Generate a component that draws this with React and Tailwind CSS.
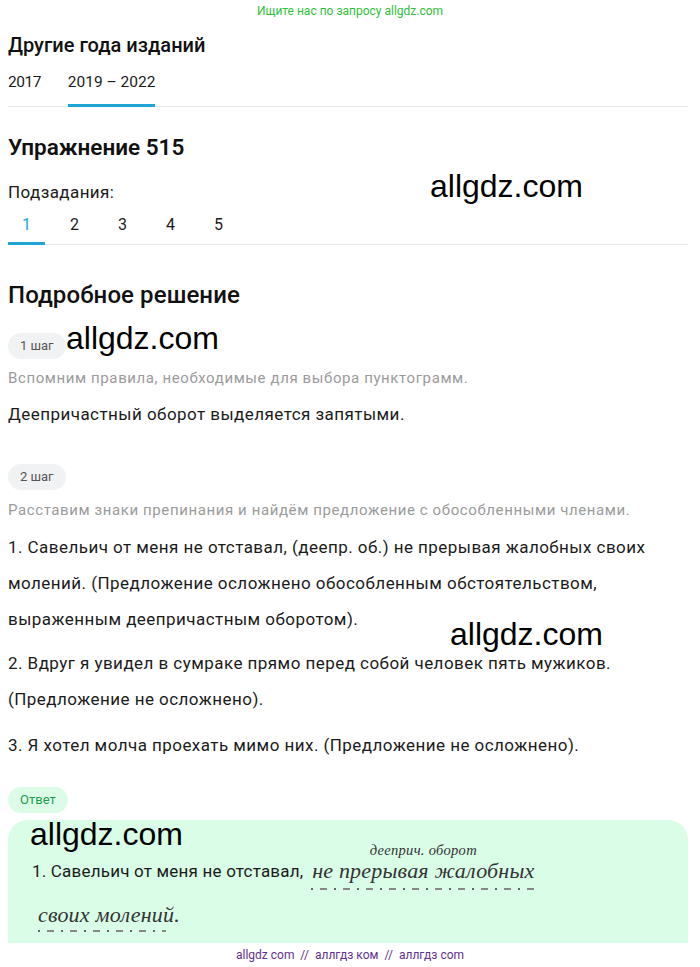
import React from "react";

function Watermark({ className }) {
  return (
    <div
      className={`absolute text-[32px] leading-none text-black font-['Liberation_Sans',Arial,sans-serif] ${className}`}
    >
      allgdz.com
    </div>
  );
}

function Badge({ children, green }) {
  return (
    <span
      className={`inline-flex items-center h-[26px] px-[12px] rounded-full text-[13px] ${
        green ? "bg-[#dcfce7] text-[#1f9d4c]" : "bg-[#f1f2f4] text-[#555]"
      }`}
    >
      {children}
    </span>
  );
}

function DashDot({ className }) {
  return (
    <div
      className={`h-[2px] bg-[repeating-linear-gradient(90deg,#666_0px,#666_2px,transparent_2px,transparent_9px,#888_9px,#888_16px,transparent_16px,transparent_23px)] ${className}`}
    />
  );
}

export default function App() {
  return (
    <div className="relative w-[700px] min-h-[967px] bg-white text-[#1b1b1b] font-['Roboto','Noto_Sans',sans-serif]">
      {/* top banner */}
      <div className="h-[22px] flex items-center justify-center text-[12px] text-[#2fbf3a]">
        Ищите нас по запросу allgdz.com
      </div>

      <div className="pl-[8px] pr-[12px]">
        <h2 className="mt-[9px] text-[20px] leading-[28px] font-medium text-[#111]">
          Другие года изданий
        </h2>
        <div className="mt-[11px] flex gap-[27px] border-b border-[#e6e7ea] text-[15.5px] leading-[24px]">
          <div className="pb-[11px] tracking-[-0.5px]">2017</div>
          <div className="pb-[10px] border-b-[3px] border-[#1fa5d4] -mb-px">2019 – 2022</div>
        </div>

        <h1 className="mt-[25px] text-[22.5px] leading-[30px] font-semibold text-[#111]">
          Упражнение 515
        </h1>
        <div className="mt-[18px] text-[17px] tracking-[0.4px] leading-[24px]">Подзадания:</div>
        <div className="mt-[9px] flex gap-[11px] border-b border-[#e6e7ea] text-[16px] leading-[24px]">
          <div className="w-[37px] text-center pb-[5px] border-b-[3px] border-[#1fa5d4] -mb-px text-[#1fa5d4]">1</div>
          <div className="w-[37px] text-center pb-[6px]">2</div>
          <div className="w-[37px] text-center pb-[6px]">3</div>
          <div className="w-[37px] text-center pb-[6px]">4</div>
          <div className="w-[37px] text-center pb-[6px]">5</div>
        </div>

        <h2 className="mt-[35px] text-[24px] leading-[30px] tracking-[0.1px] font-medium text-[#111]">
          Подробное решение
        </h2>
        <div className="mt-[23px]">
          <Badge>1 шаг</Badge>
        </div>
        <p className="mt-[9px] text-[15px] tracking-[0.6px] leading-[20px] text-[#9b9b9b]">
          Вспомним правила, необходимые для выбора пунктограмм.
        </p>
        <p className="mt-[14px] text-[17px] tracking-[0.45px] leading-[24px]">
          Деепричастный оборот выделяется запятыми.
        </p>

        <div className="mt-[38px]">
          <Badge>2 шаг</Badge>
        </div>
        <p className="mt-[10px] text-[15px] tracking-[0.6px] leading-[20px] text-[#9b9b9b]">
          Расставим знаки препинания и найдём предложение с обособленными членами.
        </p>
        <div className="mt-[9px] text-[17px] tracking-[0.45px] leading-[36px]">
          <p>
            1. Савельич от меня не отставал, (деепр. об.) не прерывая жалобных своих
            <br />
            молений. (Предложение осложнено обособленным обстоятельством,
            <br />
            выраженным деепричастным оборотом).
          </p>
          <p className="mt-[8px]">
            2. Вдруг я увидел в сумраке прямо перед собой человек пять мужиков.
            <br />
            (Предложение не осложнено).
          </p>
          <p className="mt-[10px]">
            3. Я хотел молча проехать мимо них. (Предложение не осложнено).
          </p>
        </div>

        <div className="mt-[24px]">
          <Badge green>Ответ</Badge>
        </div>

        <div className="mt-[7px] rounded-t-[20px] bg-[#d9fde6] pl-[24px] pt-[22px] pb-[40px]">
          <div className="flex items-start">
            <span className="mt-[17px] text-[17px] tracking-[0.2px] leading-[24px]">1. Савельич от меня не отставал,</span>
            <span className="ml-[8px] inline-flex flex-col items-center font-['Liberation_Serif',serif] italic text-[#333]">
              <span className="text-[14.5px] leading-[16px] tracking-[0.3px]">дееприч. оборот</span>
              <span className="mt-[1px] text-[22px] leading-[24px] tracking-[0.2px]">не прерывая жалобных</span>
              <DashDot className="mt-[5px] w-[224px]" />
              <span className="h-[10px]" />
            </span>
          </div>
          <div className="mt-[3px] ml-[6px] inline-flex flex-col font-['Liberation_Serif',serif] italic text-[#333]">
            <span className="text-[22px] leading-[24px] tracking-[0.2px]">своих молений.</span>
            <DashDot className="mt-[3px] w-[128px]" />
          </div>
        </div>
      </div>

      {/* footer */}
      <div className="fixed bottom-0 left-0 w-[700px] h-[24px] bg-white flex items-center justify-center text-[12px] text-[#5f3192]">
        allgdz com &nbsp;//&nbsp; аллгдз ком &nbsp;//&nbsp; аллгдз com
      </div>

      {/* watermarks */}
      <Watermark className="left-[430px] top-[170px]" />
      <Watermark className="left-[66px] top-[322px]" />
      <Watermark className="left-[450px] top-[618px]" />
      <Watermark className="left-[30px] top-[818px]" />
    </div>
  );
}
